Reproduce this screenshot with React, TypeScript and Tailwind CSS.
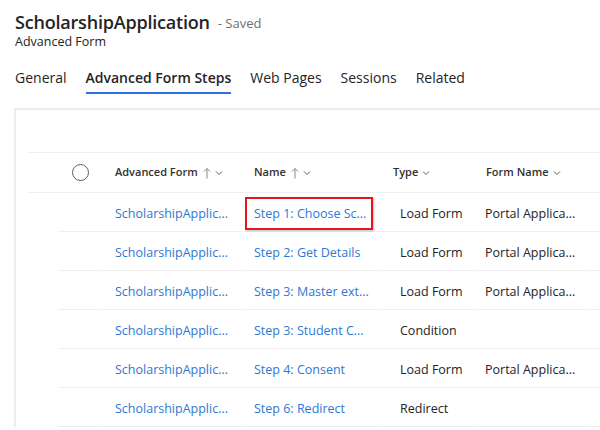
import { useState } from 'react';

interface StepRow {
    form: string;
    name: string;
    type: string;
    formName?: string;
    highlighted?: boolean;
}

const rows: StepRow[] = [
    { form: 'ScholarshipApplic...', name: 'Step 1: Choose Sc...', type: 'Load Form', formName: 'Portal Applica...', highlighted: true },
    { form: 'ScholarshipApplic...', name: 'Step 2: Get Details', type: 'Load Form', formName: 'Portal Applica...' },
    { form: 'ScholarshipApplic...', name: 'Step 3: Master ext...', type: 'Load Form', formName: 'Portal Applica...' },
    { form: 'ScholarshipApplic...', name: 'Step 3: Student C...', type: 'Condition' },
    { form: 'ScholarshipApplic...', name: 'Step 4: Consent', type: 'Load Form', formName: 'Portal Applica...' },
    { form: 'ScholarshipApplic...', name: 'Step 6: Redirect', type: 'Redirect' },
];

const tabs = ['General', 'Advanced Form Steps', 'Web Pages', 'Sessions', 'Related'];

function SortUp() {
    return (
        <svg width="8" height="12" viewBox="0 0 8 12" fill="none" stroke="#8a8886" strokeWidth="1" className="ml-[5px]">
            <path d="M4 1.5V11.5M1 4.5L4 1.5L7 4.5" />
        </svg>
    );
}

function Chevron() {
    return (
        <svg width="8" height="6" viewBox="0 0 8 6" fill="none" stroke="#605e5c" strokeWidth="1" className="ml-[4px]">
            <path d="M1 1.5L4 4.5L7 1.5" />
        </svg>
    );
}

export default function App() {
    const [activeTab, setActiveTab] = useState('Advanced Form Steps');

    return (
        <div className="w-[600px] h-[430px] overflow-hidden bg-white text-[#242424]" style={{ fontFamily: '"Open Sans", "Noto Sans", sans-serif' }}>
            {/* header */}
            <div className="pl-[15px] pt-[10px]">
                <div className="flex items-end h-[24px]">
                    <h1 className="text-[18px] font-semibold leading-[24px] tracking-[-0.2px]">ScholarshipApplication</h1>
                    <span className="ml-[8px] text-[13px] leading-[22px] text-[#707070]">- Saved</span>
                </div>
                <div className="text-[12.5px] leading-[16px]">Advanced Form</div>

                <div className="flex gap-[19px] mt-[18px] h-[26px]">
                    {tabs.map(tab => (
                        <button
                            key={tab}
                            onClick={() => setActiveTab(tab)}
                            className={
                                tab === activeTab
                                    ? 'h-[26px] text-[14px] leading-[20px] pb-[4px] border-b-[2px] border-[#2f6fdf] font-semibold'
                                    : 'h-[26px] text-[14px] leading-[20px] pb-[4px] border-b-[2px] border-transparent'
                            }
                        >
                            {tab}
                        </button>
                    ))}
                </div>
            </div>

            {/* grid panel */}
            <div className="ml-[14px] mt-[14px] border-t-[2px] border-l-[2px] border-[#ececec] pl-[12px] pt-[42px]">
                {/* column headers */}
                <div className="flex h-[41px] border-t border-b border-[#efefef] text-[11px] font-semibold text-[#323130]">
                    <div className="w-[75px] flex items-center justify-center pl-[30px] mr-px">
                        <span className="w-[17px] h-[17px] rounded-full border border-[#605e5c]" />
                    </div>
                    <div className="w-[139px] mr-px pl-[11px] flex items-center">
                        Advanced Form <SortUp /> <Chevron />
                    </div>
                    <div className="w-[139px] mr-px pl-[10px] flex items-center">
                        Name <SortUp /> <Chevron />
                    </div>
                    <div className="w-[91px] mr-px pl-[9px] flex items-center">
                        Type <Chevron />
                    </div>
                    <div className="w-[114px] mr-px pl-[10px] flex items-center">
                        Form Name <Chevron />
                    </div>
                    <div className="flex-1" />
                </div>

                {/* rows */}
                {rows.map((row, i) => (
                    <div key={i} className="flex h-[39px] text-[12.5px]">
                        <div className="w-[75px] mr-px pl-[30px]">
                            <div className="h-full border-b border-[#efefef]" />
                        </div>
                        <div className="w-[139px] mr-px pl-[11px] pt-[4px] flex items-center border-b border-[#efefef] text-[#2e78d2]">
                            {row.form}
                        </div>
                        <div className="w-[139px] mr-px pt-[2px] flex items-center border-b border-[#efefef] text-[#2e78d2]">
                            {row.highlighted ? (
                                <div className="ml-px w-[128px] h-[33px] border-[2px] border-[#e3161b] pl-[7px] pt-[2px] flex items-center shadow-[1px_1px_2px_rgba(0,0,0,0.25)]">
                                    {row.name}
                                </div>
                            ) : (
                                <span className="pl-[10px] pt-[2px]">{row.name}</span>
                            )}
                        </div>
                        <div className="w-[91px] mr-px pl-[16px] pt-[4px] flex items-center border-b border-[#efefef]">
                            {row.type}
                        </div>
                        <div className="w-[114px] mr-px pl-[9px] pt-[4px] flex items-center border-b border-[#efefef]">
                            {row.formName ?? ''}
                        </div>
                        <div className="flex-1 border-b border-[#efefef]" />
                    </div>
                ))}
            </div>
        </div>
    );
}
